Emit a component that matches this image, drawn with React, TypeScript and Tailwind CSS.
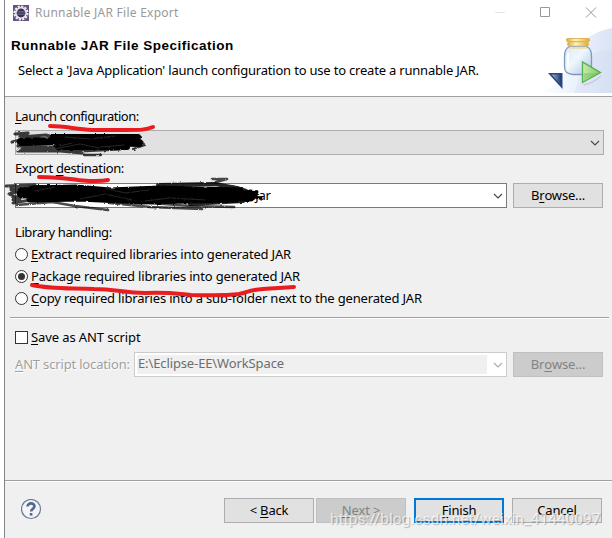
import type { ReactNode } from "react";
import clsx from "clsx";

function Key({ children }: { children: ReactNode }) {
  return <span className="underline decoration-1 underline-offset-2">{children}</span>;
}

function Chevron({ className }: { className?: string }) {
  return (
    <svg className={className} width="10" height="6" viewBox="0 0 10 6" fill="none" stroke="currentColor" strokeWidth="1.1">
      <path d="M1 1 L5 5 L9 1" />
    </svg>
  );
}

interface ButtonProps {
  children: ReactNode;
  disabled?: boolean;
  primary?: boolean;
}

function Button({ children, disabled, primary }: ButtonProps) {
  return (
    <button
      disabled={disabled}
      className={clsx(
        "flex h-[25px] w-[90px] shrink-0 items-center justify-center whitespace-pre pb-[2px]",
        disabled ? "border border-[#bfbfbf] bg-[#cccccc] text-[#838383]" : "bg-[#e1e1e1]",
        !disabled && (primary ? "border-2 border-[#0078d7]" : "border border-[#adadad]")
      )}
    >
      {children}
    </button>
  );
}

function Radio({ checked, children }: { checked?: boolean; children: ReactNode }) {
  return (
    <label className="flex h-[22px] items-start gap-[3px]">
      <span className="mt-1 flex size-[13px] shrink-0 items-center justify-center rounded-full border border-[#333333] bg-white">
        {checked && <span className="size-[7px] rounded-full bg-[#333333]" />}
      </span>
      <span className="mt-px">{children}</span>
    </label>
  );
}

function EclipseIcon() {
  return (
    <svg width="16" height="16" viewBox="0 0 16 16">
      <rect width="16" height="16" fill="#655285" />
      <circle cx="8" cy="8" r="6.6" fill="none" stroke="#f2eff3" strokeWidth="2" strokeDasharray="2.2 1.25" />
      <circle cx="8" cy="8" r="5.2" fill="#37304f" stroke="#eceaf0" strokeWidth="1.6" />
      <path d="M4 6.5h8M3.800 8h8.400M4 9.500h8" stroke="#77709b" strokeWidth="0.7" />
    </svg>
  );
}

function JarBanner() {
  return (
    <svg width="75" height="69" viewBox="0 0 75 69">
      <defs>
        <linearGradient id="sky" x1="0" x2="1">
          <stop offset="0" stopColor="#ffffff" />
          <stop offset="0.55" stopColor="#ebf0fb" />
          <stop offset="1" stopColor="#dbe4f6" />
        </linearGradient>
        <linearGradient id="glass" x1="0" x2="1" y1="0" y2="1">
          <stop offset="0" stopColor="#dce9f5" />
          <stop offset="0.45" stopColor="#eff7fc" />
          <stop offset="1" stopColor="#a9c5e0" />
        </linearGradient>
        <linearGradient id="lid" x1="0" x2="1">
          <stop offset="0" stopColor="#dfa93b" />
          <stop offset="0.4" stopColor="#fff3c0" />
          <stop offset="1" stopColor="#e0a92f" />
        </linearGradient>
        <linearGradient id="blue" x1="0" x2="1">
          <stop offset="0" stopColor="#9db5d8" />
          <stop offset="1" stopColor="#213c74" />
        </linearGradient>
        <linearGradient id="play" x1="0" x2="1">
          <stop offset="0" stopColor="#c9ecae" />
          <stop offset="1" stopColor="#7cca5e" />
        </linearGradient>
      </defs>
      <path d="M0 67 C20 62 31 46 38 28 C44 14 58 5 75 2 V67 Z" fill="url(#sky)" />
      <path d="M50 30 C59 26 68 24 75 23 V67 H37Z" fill="#cedaf1" opacity="0.35" />
      <path d="M33 20 C28 23 27.500 26 27.500 31 V40 C27.500 46 30 48 36 48.500 H46 C52 48 54.500 46 54.500 40 V31 C54.500 26 54 23 49 20 Z" fill="url(#glass)" stroke="#7b9abf" strokeWidth="1.3" />
      <path d="M31 27 V41" stroke="#ffffff" strokeWidth="2" />
      <path d="M32 22 H50" stroke="#e8d9a6" strokeWidth="1.5" />
      <rect x="29.500" y="12.500" width="23" height="3" rx="1" fill="url(#lid)" stroke="#dba63c" strokeWidth="0.8" />
      <rect x="30.500" y="16" width="21" height="4" rx="1" fill="url(#lid)" stroke="#e4b957" strokeWidth="0.6" />
      <path d="M11 47 H25.500 V63 Z" fill="#2a467d" />
      <path d="M14.500 48.500 H24 V59 Z" fill="url(#blue)" />
      <path d="M46 58 Q57 56 64 49 L64 51 Q56 58 47 60Z" fill="#b8c3d8" opacity="0.6" />
      <path d="M45.500 36 V56.500 L63.500 46.500 Z" fill="url(#play)" stroke="#55ad55" strokeWidth="1.300" />
      <path d="M46.500 47 L61.500 47 L46.500 55Z" fill="#6fbe52" opacity="0.45" />
    </svg>
  );
}

// Freehand marker drawn over the dialog
function Marker() {
  return (
    <svg className="pointer-events-none absolute inset-0" width="612" height="538" viewBox="0 0 612 538" fill="none" strokeLinecap="round" strokeLinejoin="round">
      <defs>
        <filter id="rough" x="-5%" y="-30%" width="110%" height="160%">
          <feTurbulence type="fractalNoise" baseFrequency="0.3" numOctaves="2" seed="4" />
          <feDisplacementMap in="SourceGraphic" scale="2.5" />
          <feGaussianBlur stdDeviation="0.45" />
        </filter>
      </defs>
      <g stroke="#000000" filter="url(#rough)">
        <path d="M21 142 L60 141 L100 142 L139 143" strokeWidth="8" />
        <path d="M53 137 L138 137 M58 147 L127 147" strokeWidth="6" />
        <path d="M15 134 L28 133 L20 137 L46 135 L60 139 M12 142 L25 139 L18 146 L40 147 M22 137 L52 140 M18 151 L60 151 L82 153 M22 149 L80 151 L122 149 M20 146 L70 148" strokeWidth="3.200" opacity="0.75" />
        <path d="M84 155 L101 155 M138 139 L145 145 L133 149" strokeWidth="2.300" opacity="0.75" />
        <path d="M22 193 L70 192 L120 194 L180 195 L250 196" strokeWidth="11" />
        <path d="M32 189 L75 188 L110 191 L160 189 L240 191 M30 199 L80 198 L140 201 L190 200 L238 199" strokeWidth="7" />
        <path d="M158 185 L215 184 L237 188 L246 191 L255 195 L243 201 L190 204 M62 188 L34 187 L44 187" strokeWidth="4" opacity="0.85" />
        <path d="M6 186 L35 185 L11 190 L26 189 L9 194 L20 199 L13 203 L42 198 M11 188 L22 193 L13 200" strokeWidth="3" opacity="0.75" />
        <path d="M17 205 L52 202 L75 206 L108 210 M110 203 L150 207 L202 209 M150 203 L190 206 L234 207 M212 179 L227 179 L216 182" strokeWidth="2.700" opacity="0.7" />
        <path d="M250 191 L257 192 L254 197 L261 198" strokeWidth="3" />
      </g>
      <g stroke="#6b6e70" strokeWidth="0.7" opacity="0.5" filter="url(#rough)">
        <path d="M54 149 L80 144 L99 148 M65 137 L90 139 L115 136 M100 147 L124 145 M60 146 L72 143" />
        <path d="M105 188 L125 193 L150 190 M80 199 L105 194 L132 200 M145 201 L170 198 L205 200 M35 191 L55 187" />
      </g>
      <g stroke="#e91d20" strokeWidth="4">
        <path d="M50 126 C65 126 75 129 92 130 H126 C140 130 146 130 153 127" />
        <path d="M39 177 C57 177 63 178 78 180 C91 181 98 182 108 180" />
        <path d="M32 285 C50 289 65 288 94 289 C116 289 124 293 145 293 C172 292 177 294 191 295 C207 295 222 296 239 294 C248 292 249 290 263 289 C276 288 281 288 294 287" />
      </g>
    </svg>
  );
}

export default function App() {
  return (
    <div className="relative h-[538px] w-[612px] overflow-hidden bg-white pl-1 font-['Noto_Sans','Noto_Sans_CJK_SC',sans-serif] text-[13px] leading-[18px] tracking-[-0.17px] text-black">
      <div className="flex h-full flex-col border-l border-[#83838a] bg-[#f0f0f0]">
        <div className="flex h-[26px] shrink-0 items-center bg-white pl-2 text-[#999999]">
          <EclipseIcon />
          <span className="ml-[6px] text-[12px] tracking-[0.25px]">Runnable JAR File Export</span>
          <svg className="ml-auto" width="117" height="26" viewBox="0 0 117 26" fill="none" stroke="#999999">
            <path d="M0 12.500h10" stroke="#e5e5e5" />
            <path d="M45.500 7.500h9v9h-9z" />
            <path d="M91 7.500l10 10M101 7.500l-10 10" />
          </svg>
        </div>
        <div className="flex h-[71px] shrink-0 justify-between border-b border-[#a0a0a0] bg-white">
          <div className="flex flex-col whitespace-nowrap pl-[6px] pt-[11px]">
            <h1 className="font-['Liberation_Sans',sans-serif] text-[13.5px] font-bold tracking-[0.51px]">Runnable JAR File Specification</h1>
            <p className="pl-[7px] pt-[6px] tracking-[-0.2px]">Select a 'Java Application' launch configuration to use to create a runnable JAR.</p>
          </div>
          <JarBanner />
        </div>

        <div className="flex h-[220px] shrink-0 flex-col pl-[10px] pt-[10px]">
          <span className="tracking-[-0.47px]"><Key>L</Key>aunch configuration:</span>
          <div className="mt-[5px] flex h-[25px] w-[589px] shrink-0 items-center justify-end border border-[#adadad] bg-[#e1e1e1] pr-[3px] text-[#444444]">
            <Chevron />
          </div>
          <span className="mt-1 tracking-[-0.36px]">Export <Key>d</Key>estination:</span>
          <div className="mt-[6px] flex gap-[6px]">
            <div className="flex h-[25px] w-[492px] items-center justify-between border border-[#7a7a7a] bg-white pl-[236px] pr-[3px]">
              <span className="pb-[2px]">.jar</span>
              <Chevron className="text-[#444444]" />
            </div>
            <Button>B<Key>r</Key>owse...</Button>
          </div>
          <span className="mt-[15px] tracking-[-0.4px]">Library handling:</span>
          <div className="mt-[3px] flex flex-col">
            <Radio><Key>E</Key>xtract required libraries into generated JAR</Radio>
            <Radio checked><Key>P</Key>ackage required libraries into generated JAR</Radio>
            <Radio><Key>C</Key>opy required libraries into a sub-folder next to the generated JAR</Radio>
          </div>
        </div>

        <div className="ml-[5px] mr-[3px] h-[2px] shrink-0 border-t border-[#a0a0a0] bg-white" />
        <div className="flex h-[161px] shrink-0 flex-col pl-[10px] pt-[8px]">
          <label className="flex h-[22px] items-start gap-[3px]">
            <span className="mt-1 size-[13px] border border-[#333333] bg-white" />
            <span className="mt-px tracking-[-0.1px]"><Key>S</Key>ave as ANT script</span>
          </label>
          <div className="mt-[3px] flex items-center">
            <span className="w-[119px] pb-[2px] text-[#a0a0a0] [text-shadow:1px_1px_0_#ffffff]"><Key>A</Key>NT script location:</span>
            <div className="mr-[6px] flex h-[25px] w-[373px] items-center justify-between border border-[#cccccc] bg-white py-[2px] pl-[2px] pr-[3px]">
              <span className="h-[19px] w-[350px] bg-[#f0f0f0] pl-px leading-[17px] tracking-[-0.12px] text-[#6d6d6d]">E:\Eclipse-EE\WorkSpace</span>
              <Chevron className="text-[#aaaaaa]" />
            </div>
            <Button disabled>Br<Key>o</Key>wse...</Button>
          </div>
        </div>

        <div className="h-[2px] shrink-0 border-t border-[#a0a0a0] bg-white" />
        <div className="flex grow items-start pl-4 pt-4">
          <svg className="mt-px" width="21" height="21" viewBox="0 0 21 21">
            <circle cx="10" cy="10" r="9.500" fill="#f5f5f7" stroke="#667a99" strokeWidth="1.2" />
            <path d="M6.500 7.500C6.500 3.300 13.500 3.500 13.500 7.300C13.500 9.800 10.100 9.600 10.100 12.500" fill="none" stroke="#53688d" strokeWidth="2.600" />
            <rect x="8.800" y="14" width="2.600" height="2.600" fill="#53688d" />
          </svg>
          <div className="ml-[182px] flex gap-2">
            <div className="flex gap-[2px]">
              <Button>{"< "}<Key>B</Key>ack</Button>
              <Button disabled><Key>N</Key>{"ext >"}</Button>
            </div>
            <Button primary><Key>F</Key>inish</Button>
            <Button>Cancel</Button>
          </div>
        </div>
      </div>
      <Marker />
      <span className="absolute left-[330px] top-[509px] whitespace-nowrap font-[Roboto,sans-serif] text-[15.5px] leading-[20px] tracking-normal text-white/70 [text-shadow:1px_1px_1px_rgba(0,0,0,0.25)]">https://blog.csdn.net/weixin_41440097</span>
    </div>
  );
}
